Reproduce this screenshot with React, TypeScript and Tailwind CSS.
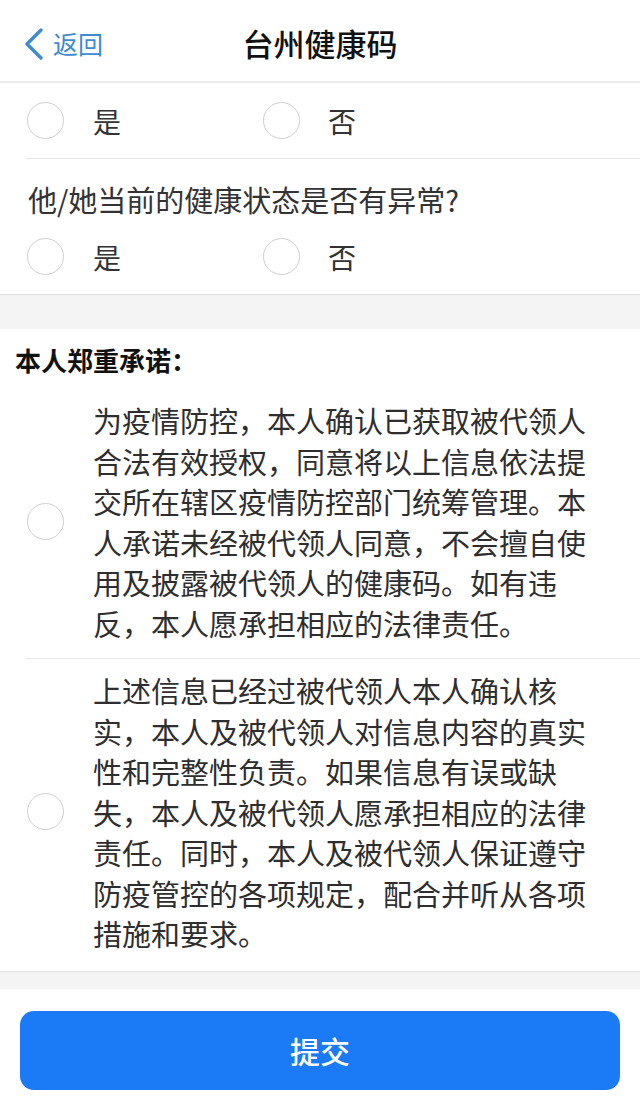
const font = "font-['Noto_Sans_CJK_SC','Noto_Sans',sans-serif]";

function Radio() {
  return <span className="block h-[37px] w-[37px] shrink-0 rounded-full border-[1.5px] border-[#cfcfcf] bg-white" />;
}

function YesNo({ className = "" }: { className?: string }) {
  return (
    <div className={`flex items-center pl-[27px] text-[28px] text-[#333] ${className}`}>
      <div className="flex w-[236px] items-center gap-[29px]">
        <Radio />
        <span>是</span>
      </div>
      <div className="flex items-center gap-[28px]">
        <Radio />
        <span>否</span>
      </div>
    </div>
  );
}

function Pledge({ text, className = "" }: { text: string; className?: string }) {
  return (
    <div className={`flex items-center pl-[27px] ${className}`}>
      <Radio />
      <p className="ml-[29px] w-[500px] text-[29px] leading-[40.5px] text-[#2e2e2e]">{text}</p>
    </div>
  );
}

export default function App() {
  return (
    <div className={`min-h-[1112px] w-[640px] bg-white ${font}`}>
      <div className="h-[6px]" />

      <header className="grid h-[77px] grid-cols-[1fr_auto_1fr] items-center border-b-2 border-[#ebebeb]">
        <div className="flex items-center pl-[24px] text-[#3d8bd2]">
          <svg width="20" height="32" viewBox="0 0 20 32" fill="none" stroke="currentColor" strokeWidth="3.4" strokeLinecap="round" strokeLinejoin="round">
            <path d="M17 2 3 16l14 14" />
          </svg>
          <span className="ml-[9px] text-[25px]">返回</span>
        </div>
        <h1 className="text-[31px] font-medium text-[#111]">台州健康码</h1>
        <div />
      </header>

      <section className="border-b border-[#e2e2e2]">
        <YesNo className="h-[75px]" />
        <div className="ml-[26px] border-b border-[#e6e6e6]" />
        <p className="mt-[20px] pl-[28px] text-[29px] leading-[40px] text-[#333]">他/她当前的健康状态是否有异常?</p>
        <YesNo className="h-[75px]" />
      </section>

      <div className="h-[34px] bg-[#f4f4f4]" />

      <section className="border-b border-[#e2e2e2]">
        <h2 className="mt-[11px] pl-[15px] text-[26px] font-bold leading-[40px] text-[#111]">本人郑重承诺：</h2>
        <Pledge
          className="pb-[15px] pt-[20px]"
          text="为疫情防控，本人确认已获取被代领人合法有效授权，同意将以上信息依法提交所在辖区疫情防控部门统筹管理。本人承诺未经被代领人同意，不会擅自使用及披露被代领人的健康码。如有违反，本人愿承担相应的法律责任。"
        />
        <div className="ml-[26px] border-b border-[#e6e6e6]" />
        <Pledge
          className="pb-[17px] pt-[11px]"
          text="上述信息已经过被代领人本人确认核实，本人及被代领人对信息内容的真实性和完整性负责。如果信息有误或缺失，本人及被代领人愿承担相应的法律责任。同时，本人及被代领人保证遵守防疫管控的各项规定，配合并听从各项措施和要求。"
        />
      </section>

      <div className="h-[17px] bg-[#f4f4f4]" />

      <div className="px-[20px] pt-[22px]">
        <button className="flex h-[79px] w-full items-center justify-center rounded-[14px] bg-[#1b7af6] text-[30px] font-medium text-white">
          提交
        </button>
      </div>
    </div>
  );
}
